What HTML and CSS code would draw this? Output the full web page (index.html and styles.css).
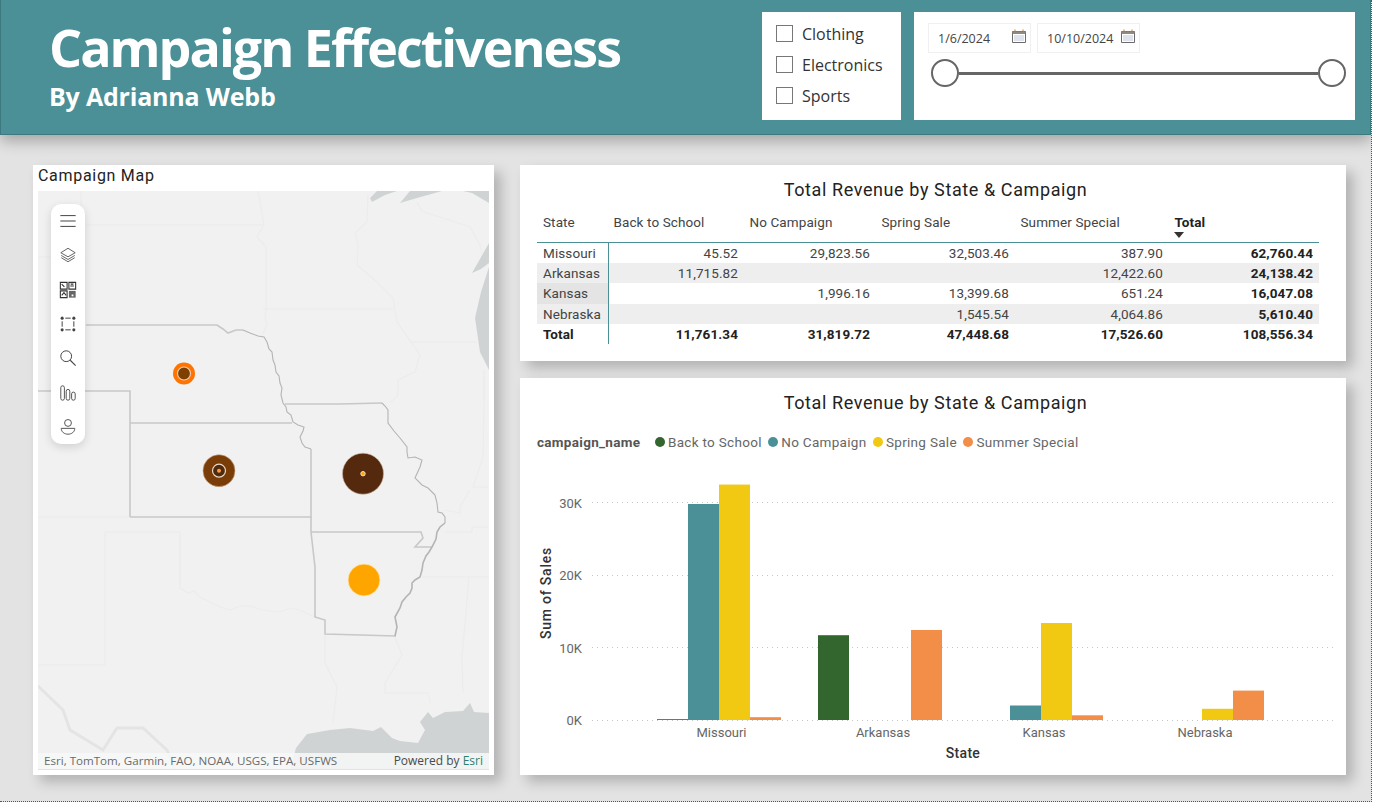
FILE: index.html
```html
<!DOCTYPE html>
<html>
    <head>
        <meta charset="utf-8">
        <title>Campaign Effectiveness</title>

        <link rel="stylesheet" href="styles.css">
    </head>
    <body>
        <div class="page">
            <div class="banner">
                <div class="banner-text">
                    <h1 class="banner-title">Campaign Effectiveness</h1>
                    <h2 class="banner-sub">By Adrianna Webb</h2>
                </div>
                <div class="slicer category-slicer">
                    <div class="check-row"><span class="check-box"></span>Clothing</div>
                    <div class="check-row"><span class="check-box"></span>Electronics</div>
                    <div class="check-row"><span class="check-box"></span>Sports</div>
                </div>
                <div class="slicer date-slicer">
                    <div class="date-row">
                        <div class="date-box">1/6/2024
                            <svg class="cal-icon" viewBox="0 0 14 14"><path d="M.5 2.5h13v11H.5z" fill="none" stroke="#6b6b6b"/><path d="M.5 2.5h13v2.5H.5z" fill="#8a8a8a"/><path d="M3 .5v3M11 .5v3" stroke="#c77b2c"/><path d="M2.5 7h9M2.5 9h9M2.5 11h9" stroke="#7d8fb0" stroke-dasharray="1 1"/></svg>
                        </div>
                        <div class="date-box">10/10/2024
                            <svg class="cal-icon" viewBox="0 0 14 14"><path d="M.5 2.5h13v11H.5z" fill="none" stroke="#6b6b6b"/><path d="M.5 2.5h13v2.5H.5z" fill="#8a8a8a"/><path d="M3 .5v3M11 .5v3" stroke="#c77b2c"/><path d="M2.5 7h9M2.5 9h9M2.5 11h9" stroke="#7d8fb0" stroke-dasharray="1 1"/></svg>
                        </div>
                    </div>
                    <div class="range">
                        <span class="range-handle"></span>
                        <span class="range-track"></span>
                        <span class="range-handle"></span>
                    </div>
                </div>
            </div>

            <div class="content">
                <div class="card map-card">
                    <div class="map-title">Campaign Map</div>
                    <div class="map-wrap">
                        <svg class="map" viewBox="38 191 451 579">
                            <rect x="38" y="191" width="451" height="579" fill="#f1f1f1"/>
                            <!-- water -->
                            <g fill="#d0d3d4">
                                <path d="M370 198L377 191H397L385 195L372 202Z"/>
                                <path d="M400 203L410 191H442L417 198Z"/>
                                <path d="M463 191H489V203L472 193Z"/>
                                <path d="M472 273L489 243V263L481 269Z"/>
                                <path d="M489 267L481 292L475 318L480 352L489 370Z"/>
                                <path d="M290 770L296 748L307 734L330 730L350 728L373 731L381 727L392 738L400 741L418 743L425 730L420 722L428 712L433 718L445 712L463 711L470 703L474 712L489 713V770Z"/>
                            </g>
                            <!-- other states -->
                            <g fill="none" stroke="#ececec" stroke-width="1.2">
                                <path d="M81 191V225M86 225H264M38 257H86"/>
                                <path d="M258 191L264 225L257 237L266 247V309L265 318L267 325L262 335"/>
                                <path d="M263 309H393"/>
                                <path d="M368 195L367 222L355 233L358 245L357 265L377 282L393 298L397 322L420 355L415 372L398 380L398 395L390 403"/>
                                <path d="M417 202L422 211L470 227L480 245L482 255"/>
                                <path d="M410 342H477"/>
                                <path d="M484 370V400L483 457L473 487L488 487M470 490L460 507L460 513L445 510"/>
                                <path d="M445 532H472V527H488M422 577H489M469 578L462 657L463 693"/>
                                <path d="M395 637L402 655L385 683V693H428L430 703"/>
                                <path d="M325 635V663L337 687L333 723"/>
                                <path d="M38 517H130M105 532H180V588L188 593L194 591L200 597L210 602L220 607L230 610L240 606L250 606L262 610L280 612L290 608L300 610L315 617M105 532V665H38"/>
                            </g>
                            <path d="M38 686L63 710L70 730L103 750L117 728L143 728L167 750L175 770" fill="none" stroke="#e4e4e4" stroke-width="3"/>
                            <!-- campaign states -->
                            <g fill="none" stroke="#c8c8c8" stroke-width="1.6">
                                <path d="M86 325H217L223 329L228 333L236 330L243 330"/>
                                <path d="M38 391H130V517"/>
                                <path d="M130 423H292M311 449V517H130"/>
                                <path d="M311 532H421L423 538L415 547H432"/>
                                <path d="M311 517V532L315 567V617L325 620V634L396 636"/>
                                <path d="M285 404L340 404L382 403"/>
                            </g>
                            <!-- rivers -->
                            <g fill="none" stroke="#b4b4b4" stroke-width="1.1">
                                <path d="M243 330L250 333L258 336L264 337L267 342L269 349L272 352L273 360L275 365L276 372L279 376L280 383L282 388L281 395L283 403L286 407L287 412L291 415L293 422L298 425L304 427L303 431L300 437L302 443L305 447L311 449"/>
                                <path d="M382 403L385 406L388 410L388 423L394 431L400 438L407 447L407 452L408 458L415 457L422 460L420 467L415 478L422 485L428 488L433 493L435 495L437 503L438 512L442 513L445 517L445 523"/>
                            </g>
                            <path d="M445 523L440 527L437 532L436 539L432 547L429 552L426 556L423 563L422 570L420 577L415 580L412 583L412 588L410 593L406 597L402 602L400 608L395 617L396 622L397 627L395 636" fill="none" stroke="#b4b4b4" stroke-width="1.6"/>
                            <!-- bubbles -->
                            <circle cx="184" cy="373.5" r="11" fill="#ff7300"/>
                            <circle cx="184" cy="373.5" r="6.5" fill="#7f3f00" stroke="#e8cdb4" stroke-width="1.2"/>
                            <circle cx="219" cy="470.7" r="16" fill="#7a3d07" stroke="#c9a98c" stroke-width=".6"/>
                            <circle cx="219" cy="470.7" r="6.5" fill="#4f2a0e" stroke="#e8d8c8" stroke-width="1.2"/>
                            <circle cx="219" cy="470.7" r="2" fill="#ff9a3c"/>
                            <circle cx="363" cy="473.7" r="20.5" fill="#54290d" stroke="#c9b3a0" stroke-width=".6"/>
                            <circle cx="363" cy="473.7" r="2.2" fill="#ffa500" stroke="#f4e3c8" stroke-width="1"/>
                            <circle cx="364" cy="580" r="16" fill="#ffa500" stroke="#ffe6b5" stroke-width=".8"/>
                        </svg>

                        <div class="map-tools">
                            <svg class="tool" viewBox="0 0 20 20"><path d="M1.500 4h17M1.500 10h17M1.500 16h17" stroke="#444" stroke-width="1.100" fill="none"/></svg>
                            <svg class="tool" viewBox="0 0 20 20"><path d="M10 2.500L18 7.500L10 12L2 7.500Z M2.500 10.500L10 15L17.500 10.500 M2.500 13L10 17.500L17.500 13" stroke="#555" stroke-width="1" fill="none"/></svg>
                            <svg class="tool" viewBox="0 0 20 20"><g fill="none" stroke="#333" stroke-width="1.200"><path d="M1.500 1.500h7.500v7.500H1.500zM11 1.500h7.500v7.500H11zM1.500 11h7.500v7.500H1.500z"/><path d="M3 3.500L6 6.500M12.500 5.500h4M16 3.500h-3M3 16l2.500-3L8 16"/></g><path d="M11 11h7.500v7.500H11z" fill="#666"/><path d="M14 15h2v2h-2z" fill="#fff"/></svg>
                            <svg class="tool" viewBox="0 0 20 20"><path d="M3.500 7V13M16.500 7V13M7 3.500H13M7 16.500H13" stroke="#444" stroke-width="1.100" fill="none"/><g fill="#444"><circle cx="3.500" cy="3.500" r="1.700"/><circle cx="16.500" cy="3.500" r="1.700"/><circle cx="3.500" cy="16.500" r="1.700"/><circle cx="16.500" cy="16.500" r="1.700"/></g></svg>
                            <svg class="tool" viewBox="0 0 20 20"><circle cx="8" cy="8" r="6" stroke="#444" stroke-width="1.100" fill="none"/><path d="M12.500 12.500L18.500 18.500" stroke="#444" stroke-width="1.200"/></svg>
                            <svg class="tool" viewBox="0 0 20 20"><g fill="none" stroke="#444"><rect x="2" y="2" width="4" height="16" rx="2"/><rect x="8" y="6" width="4" height="12" rx="2"/><rect x="14" y="9" width="4" height="9" rx="2"/></g></svg>
                            <svg class="tool" viewBox="0 0 20 20"><g fill="none" stroke="#444"><circle cx="10" cy="5.500" r="3.800"/><path d="M2.500 11.500H17.500C17.500 15.500 14 18 10 18C6 18 2.500 15.500 2.500 11.500Z"/></g></svg>
                        </div>

                        <div class="map-credit">
                            <span>Esri, TomTom, Garmin, FAO, NOAA, USGS, EPA, USFWS</span>
                            <span class="credit-by">Powered by <span class="credit-link">Esri</span></span>
                        </div>
                    </div>
                </div>

                <div class="right-col">
                    <div class="card table-card">
                        <div class="visual-title">Total Revenue by State &amp; Campaign</div>
                        <table class="matrix">
                            <colgroup>
                                <col class="col-state"><col class="col-back"><col class="col-none"><col class="col-spring"><col class="col-summer"><col class="col-total">
                            </colgroup>
                            <thead>
                                <tr>
                                    <th>State</th><th>Back to School</th><th>No Campaign</th><th>Spring Sale</th><th>Summer Special</th>
                                    <th class="strong">Total<span class="sort-arrow"></span></th>
                                </tr>
                            </thead>
                            <tbody>
                                <tr><td>Missouri</td><td>45.52</td><td>29,823.56</td><td>32,503.46</td><td>387.90</td><td class="strong">62,760.44</td></tr>
                                <tr class="alt"><td>Arkansas</td><td>11,715.82</td><td></td><td></td><td>12,422.60</td><td class="strong">24,138.42</td></tr>
                                <tr><td class="picked">Kansas</td><td></td><td>1,996.16</td><td>13,399.68</td><td>651.24</td><td class="strong">16,047.08</td></tr>
                                <tr class="alt"><td>Nebraska</td><td></td><td></td><td>1,545.54</td><td>4,064.86</td><td class="strong">5,610.40</td></tr>
                                <tr class="strong"><td>Total</td><td>11,761.34</td><td>31,819.72</td><td>47,448.68</td><td>17,526.60</td><td>108,556.34</td></tr>
                            </tbody>
                        </table>
                    </div>

                    <div class="card chart-card">
                        <div class="visual-title">Total Revenue by State &amp; Campaign</div>
                        <div class="legend">
                            <span class="legend-name">campaign_name</span>
                            <span class="legend-item"><i class="dot dot-back"></i>Back to School</span>
                            <span class="legend-item"><i class="dot dot-none"></i>No Campaign</span>
                            <span class="legend-item"><i class="dot dot-spring"></i>Spring Sale</span>
                            <span class="legend-item"><i class="dot dot-summer"></i>Summer Special</span>
                        </div>
                        <svg class="plot" viewBox="520 460 826 315">
                            <g class="grid">
                                <line x1="592" x2="1333" y1="502.500" y2="502.500"/>
                                <line x1="592" x2="1333" y1="575.500" y2="575.500"/>
                                <line x1="592" x2="1333" y1="647.500" y2="647.500"/>
                                <line x1="592" x2="1333" y1="720.500" y2="720.500"/>
                            </g>
                            <g class="y-labels">
                                <text x="582" y="507.500">30K</text>
                                <text x="582" y="580">20K</text>
                                <text x="582" y="652.500">10K</text>
                                <text x="582" y="725">0K</text>
                            </g>
                            <g class="cat-labels">
                                <text x="721.500" y="737">Missouri</text>
                                <text x="883" y="737">Arkansas</text>
                                <text x="1044" y="737">Kansas</text>
                                <text x="1205" y="737">Nebraska</text>
                            </g>
                            <text class="axis-title" x="963" y="758">State</text>
                            <text class="axis-title y-title" transform="translate(551 593) rotate(-90)">Sum of Sales</text>

                            <rect class="bar-back" x="657" y="719.200" width="31" height=".8"/>
                            <rect class="bar-none" x="688" y="504" width="31" height="216"/>
                            <rect class="bar-spring" x="719" y="484.600" width="31" height="235.400"/>
                            <rect class="bar-summer" x="750" y="717.200" width="31" height="2.800"/>

                            <rect class="bar-back" x="818" y="635.200" width="31" height="84.800"/>
                            <rect class="bar-summer" x="911" y="630" width="31" height="90"/>

                            <rect class="bar-none" x="1010" y="705.500" width="31" height="14.500"/>
                            <rect class="bar-spring" x="1041" y="623" width="31" height="97"/>
                            <rect class="bar-summer" x="1072" y="715.300" width="31" height="4.700"/>

                            <rect class="bar-spring" x="1202" y="708.800" width="31" height="11.200"/>
                            <rect class="bar-summer" x="1233" y="690.600" width="31" height="29.400"/>
                        </svg>
                    </div>
                </div>
            </div>
        </div>
    </body>
</html>
```

FILE: styles.css
```css
html, body {
    margin: 0;
    height: 100%;
    overflow: hidden;
    background-color: #ffffff;
}
.page {
    width: 1371px;
    height: 801px;
    background-color: #e3e3e3;
    border-right: 1px dotted #555;
    border-bottom: 1px dotted #555;
    overflow: hidden;
}

/* header */
.banner {
    display: flex;
    box-sizing: border-box;
    height: 135px;
    padding: 12px 15px 0 48px;
    background-color: #4b9097;
    border: 1px solid #3c7a80;
    border-top: 0;
    box-shadow: 0 6px 14px rgba(0, 0, 0, 0.28);
}
.banner-text {
    width: 713px;
    color: white;
    font-family: "Open Sans", sans-serif;
    font-weight: 700;
}
.banner-title {
    margin: 0;
    font-size: 52px;
    line-height: 70px;
    letter-spacing: -2px;
}
.banner-sub {
    margin: -1px 0 0 0;
    font-size: 25px;
    line-height: 30px;
    letter-spacing: -0.2px;
}
.slicer {
    box-sizing: border-box;
    height: 108px;
    background-color: white;
    font-family: "Open Sans", sans-serif;
}
.category-slicer {
    width: 139px;
    margin-right: 13px;
    padding: 6px 0 0 14px;
    color: #333;
    font-size: 16px;
}
.check-row {
    display: flex;
    align-items: center;
    height: 31px;
}
.check-box {
    box-sizing: border-box;
    width: 17px;
    height: 17px;
    margin-right: 9px;
    background: white;
    border: 1px solid #777;
}
.date-slicer {
    width: 441px;
    padding: 11px 9px 0 14px;
}
.date-row {
    display: flex;
    gap: 6px;
}
.date-box {
    display: flex;
    justify-content: space-between;
    align-items: center;
    box-sizing: border-box;
    width: 103px;
    height: 30px;
    padding: 0 4px 0 9px;
    border: 1px solid #f0f0f0;
    color: #444;
    font-size: 12.500px;
}
.cal-icon {
    width: 14px;
    height: 14px;
    margin-top: -5px;
}
.range {
    display: flex;
    align-items: center;
    margin: 6px 0 0 3px;
}
.range-track {
    flex: 1;
    height: 3px;
    background-color: #666;
}
.range-handle {
    box-sizing: border-box;
    width: 28px;
    height: 28px;
    background: white;
    border: 2.500px solid #666;
    border-radius: 50%;
}

/* body of the report */
.content {
    display: grid;
    grid-template-columns: 461px 826px;
    gap: 26px;
    padding: 30px 0 0 33px;
}
.card {
    background-color: white;
    box-shadow: 7px 7px 12px rgba(0, 0, 0, 0.22);
}
.right-col {
    display: flex;
    flex-direction: column;
    gap: 17px;
}
.visual-title {
    padding-left: 5px;
    color: #222;
    font-family: Roboto, sans-serif;
    font-size: 18px;
    line-height: 24px;
    letter-spacing: 0.6px;
    text-align: center;
}

/* map */
.map-card {
    box-sizing: border-box;
    height: 610px;
    padding: 0 5px 5px 5px;
}
.map-title {
    height: 26px;
    color: #222;
    font-family: Roboto, sans-serif;
    font-size: 16px;
    line-height: 22px;
    letter-spacing: 0.7px;
}
.map-wrap {
    position: relative;
    height: 579px;
}
.map {
    display: block;
    width: 451px;
    height: 579px;
}
.map-tools {
    position: absolute;
    top: 13px;
    left: 13px;
    width: 34px;
    height: 240px;
    display: flex;
    flex-direction: column;
    align-items: center;
    justify-content: space-around;
    background: white;
    border-radius: 10px;
    box-shadow: 0 3px 10px rgba(0, 0, 0, 0.14);
}
.tool {
    width: 18px;
    height: 18px;
}
.map-credit {
    position: absolute;
    left: 0;
    right: 0;
    bottom: 0;
    display: flex;
    justify-content: space-between;
    box-sizing: border-box;
    height: 17px;
    padding: 0 6px;
    background: rgba(247, 249, 248, 0.85);
    border-bottom: 1px solid #e2e2e2;
    color: #6a6a6a;
    font-family: "Open Sans", sans-serif;
    font-size: 11.600px;
    line-height: 16px;
}
.credit-by {
    color: #4a4a4a;
    font-size: 12px;
}
.credit-link {
    color: #2d7f72;
}

/* matrix */
.table-card {
    box-sizing: border-box;
    height: 196px;
    padding-top: 13px;
}
.matrix {
    width: 782px;
    margin: 9px 0 0 17px;
    border-collapse: collapse;
    table-layout: fixed;
    color: #444;
    font-family: Roboto, sans-serif;
    font-size: 13.500px;
    letter-spacing: 0.1px;
}
.col-state { width: 71px; }
.col-back { width: 136px; }
.col-none { width: 132px; }
.col-spring { width: 139px; }
.col-summer { width: 154px; }
.col-total { width: 150px; }
.matrix th {
    box-sizing: border-box;
    height: 31px;
    padding: 0 0 8px 5.500px;
    border-bottom: 1px solid #4b9097;
    font-weight: 400;
    text-align: left;
    vertical-align: middle;
}
.matrix th:first-child,
.matrix td:first-child {
    padding-left: 6px;
}
.matrix th.strong {
    position: relative;
    color: #222;
    font-weight: 700;
}
.sort-arrow {
    position: absolute;
    left: 5px;
    top: 21px;
    border-left: 5px solid transparent;
    border-right: 5px solid transparent;
    border-top: 6px solid #333;
}
.matrix td {
    height: 20.400px;
    padding: 0 6px 0 0;
    text-align: right;
    white-space: nowrap;
}
.matrix td:first-child {
    padding-right: 0;
    border-right: 1px solid #4b9097;
    text-align: left;
}
.matrix .alt td {
    background-color: #eeeeee;
}
.matrix td.picked {
    background-color: #e4e4e4;
}
.matrix td.strong,
.matrix tr.strong td {
    color: #222;
    font-weight: 700;
}

/* column chart */
.chart-card {
    height: 397px;
    padding-top: 13px;
    box-sizing: border-box;
}
.legend {
    display: flex;
    align-items: center;
    height: 20px;
    margin: 17px 0 8px 0;
    padding-left: 17px;
    color: #666;
    font-family: Roboto, sans-serif;
    font-size: 13.500px;
    letter-spacing: 0.3px;
}
.legend-name {
    width: 118px;
    color: #555;
    font-weight: 700;
}
.legend-item {
    display: flex;
    align-items: center;
    margin-right: 6.500px;
}
.dot {
    width: 10px;
    height: 10px;
    margin-right: 3px;
    border-radius: 50%;
}
.dot-back { background-color: #33662f; }
.dot-none { background-color: #4b9097; }
.dot-spring { background-color: #f1c912; }
.dot-summer { background-color: #f28e48; }
.plot {
    display: block;
    width: 826px;
    height: 315px;
}
.grid line {
    stroke: #c4c4c4;
    stroke-width: 1;
    stroke-dasharray: 1 4;
}
.y-labels text {
    fill: #666;
    font-family: Roboto, sans-serif;
    font-size: 13px;
    text-anchor: end;
}
.cat-labels text {
    fill: #666;
    font-family: Roboto, sans-serif;
    font-size: 13px;
    text-anchor: middle;
}
.axis-title {
    fill: #333;
    font-family: Roboto, sans-serif;
    font-size: 14px;
    font-weight: 500;
    letter-spacing: 0.3px;
    text-anchor: middle;
}
.y-title {
    letter-spacing: 0.8px;
}
.bar-back { fill: #33662f; }
.bar-none { fill: #4b9097; }
.bar-spring { fill: #f1c912; }
.bar-summer { fill: #f28e48; }
```
